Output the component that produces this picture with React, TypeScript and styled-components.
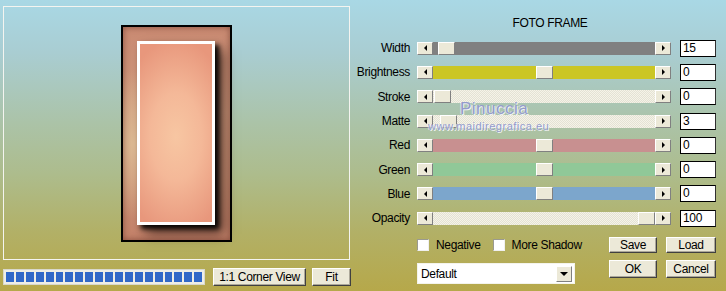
import * as React from 'react';
import styled, { createGlobalStyle } from 'styled-components';

const GlobalStyle = createGlobalStyle`
  html, body {
    margin: 0;
    padding: 0;
  }
  body {
    font-family: "Liberation Sans", Arial, sans-serif;
    font-size: 12px;
    letter-spacing: -0.35px;
    color: #000;
  }
`;

const Window = styled.div`
  position: relative;
  width: 726px;
  height: 291px;
  display: flex;
  overflow: hidden;
  background: linear-gradient(
    to bottom,
    #a9d8e5 0%,
    #a9cdd2 18%,
    #abc3a8 42%,
    #adbc8c 60%,
    #b2b066 80%,
    #b6a84a 100%
  );
`;

const LeftPane = styled.div`
  width: 352px;
  padding: 6px 0 0 3px;
  box-sizing: border-box;
  display: flex;
  flex-direction: column;
`;

const Preview = styled.div`
  width: 347px;
  height: 254px;
  box-sizing: border-box;
  border: 1px solid #f4f4f0;
  display: flex;
  align-items: center;
  justify-content: center;
`;

const Frame = styled.div`
  width: 111px;
  height: 217px;
  box-sizing: border-box;
  border: 2px solid #000;
  padding: 14px 0 0 14px;
  background:
    radial-gradient(ellipse 60% 50% at 10% 55%, rgba(222, 190, 150, 0.9), rgba(222, 190, 150, 0) 70%),
    linear-gradient(to bottom, #c98a72 0%, #d09a7e 40%, #cc9276 70%, #c4826a 100%);
  box-shadow: inset 0 0 6px rgba(90, 40, 30, 0.6);
`;

const Card = styled.div`
  width: 78px;
  height: 184px;
  box-sizing: border-box;
  border: 3px solid #fff;
  background:
    radial-gradient(ellipse 80% 55% at 50% 52%, #f7c6a2 0%, #f4b898 45%, #e8977c 100%);
  box-shadow: 4px 4px 5px rgba(0, 0, 0, 0.95), 9px 9px 12px rgba(30, 15, 10, 0.6);
`;

const BottomBar = styled.div`
  display: flex;
  align-items: center;
  margin-top: 8px;
`;

const Progress = styled.div`
  width: 202px;
  height: 16px;
  box-sizing: border-box;
  padding: 2px 2px;
  background: #eeeee6;
  border: 1px solid #d8d8cc;
  display: flex;
  gap: 2px;
`;

const Block = styled.div`
  width: 8px;
  height: 100%;
  background: #3068c8;
`;

const Button = styled.button<{ $w: number; $h: number }>`
  width: ${(p) => p.$w}px;
  height: ${(p) => p.$h}px;
  padding: 0;
  box-sizing: border-box;
  background: #ece9d8;
  border: 1px solid;
  border-color: #ffffff #404040 #404040 #ffffff;
  box-shadow: inset -1px -1px 0 #aca899;
  font-family: inherit;
  font-size: 12px;
  letter-spacing: -0.35px;
  white-space: nowrap;
  color: #000;
  line-height: 1;
`;

const RightPane = styled.div`
  position: relative;
  flex: 1;
  display: flex;
  flex-direction: column;
`;

const Title = styled.div`
  height: 36px;
  box-sizing: border-box;
  padding: 16px 0 0 22px;
  text-align: center;
  line-height: 14px;
`;

const Rows = styled.div`
  display: grid;
  grid-template-columns: 58px 255px 36px;
  grid-auto-rows: 24.3px;
  column-gap: 7px;
  align-items: center;
`;

const Label = styled.div`
  text-align: right;
  line-height: 14px;
  white-space: nowrap;
`;

const Slider = styled.div`
  display: flex;
  height: 13px;
  margin-right: 1px;
`;

const ArrowBtn = styled.div`
  width: 16px;
  height: 13px;
  box-sizing: border-box;
  background: #ece9d8;
  border: 1px solid;
  border-color: #ffffff #808080 #808080 #ffffff;
  display: flex;
  align-items: center;
  justify-content: center;
`;

const Tri = styled.div<{ $dir: 'left' | 'right' | 'down' }>`
  width: 0;
  height: 0;
  ${(p) =>
    p.$dir === 'left'
      ? 'border-top: 3px solid transparent; border-bottom: 3px solid transparent; border-right: 3px solid #000;'
      : p.$dir === 'right'
      ? 'border-top: 3px solid transparent; border-bottom: 3px solid transparent; border-left: 3px solid #000;'
      : 'border-left: 4px solid transparent; border-right: 4px solid transparent; border-top: 4px solid #000;'}
`;

const Track = styled.div<{ $color: string }>`
  position: relative;
  flex: 1;
  background: ${(p) =>
    p.$color === 'hatch'
      ? 'repeating-conic-gradient(#f5f3e8 0 25%, #e4e2d4 0 50%) 0 0 / 2px 2px'
      : p.$color};
`;

const Thumb = styled.div`
  position: absolute;
  top: 0;
  width: 17px;
  height: 13px;
  box-sizing: border-box;
  background: #ece9d8;
  border: 1px solid;
  border-color: #ffffff #808080 #808080 #ffffff;
`;

const ValueBox = styled.div`
  width: 36px;
  height: 17px;
  box-sizing: border-box;
  background: #fff;
  border: 1px solid #000;
  border-right-color: #303030;
  padding-left: 2px;
  line-height: 15px;
  margin-left: 1px;
`;

const Controls = styled.div`
  display: flex;
  margin-top: 7px;
  padding-left: 65px;
`;

const LeftControls = styled.div`
  width: 192px;
  display: flex;
  flex-direction: column;
`;

const CheckRow = styled.div`
  display: flex;
  align-items: center;
  height: 16px;
`;

const Check = styled.label<{ $gap: number }>`
  display: flex;
  align-items: center;
  gap: 7px;
  margin-right: ${(p) => p.$gap}px;
  line-height: 14px;
  white-space: nowrap;
`;

const Box = styled.span`
  display: inline-block;
  width: 12px;
  height: 12px;
  box-sizing: border-box;
  background: #fff;
  border: 1px solid;
  border-color: #9a9a90 #f0f0f0 #f0f0f0 #9a9a90;
`;

const Select = styled.div`
  margin-top: 10px;
  width: 158px;
  height: 21px;
  box-sizing: border-box;
  background: #fff;
  border: 1px solid #f4f4ec;
  display: flex;
  align-items: center;
  justify-content: space-between;
  padding: 0 2px 0 3px;
`;

const DropBtn = styled.div`
  width: 16px;
  height: 16px;
  box-sizing: border-box;
  background: #ece9d8;
  border: 1px solid;
  border-color: #ffffff #808080 #808080 #ffffff;
  display: flex;
  align-items: center;
  justify-content: center;
`;

const ButtonGrid = styled.div`
  display: grid;
  grid-template-columns: 48px 50px;
  grid-template-rows: 16px 18px;
  column-gap: 9px;
  row-gap: 7px;
`;

const Watermark = styled.div<{ $size: number; $left: number; $top: number }>`
  position: absolute;
  left: ${(p) => p.$left}px;
  top: ${(p) => p.$top}px;
  font-family: "Liberation Sans", Arial, sans-serif;
  font-size: ${(p) => p.$size}px;
  color: #939bcb;
  letter-spacing: 0.5px;
  text-shadow: 1px 1px 0 #f2f2f6, -1px 0 0 rgba(255, 255, 255, 0.6);
  white-space: nowrap;
`;

interface ISliderRow {
  name: string;
  value: string;
  color: string;
  pos: number;
}

const rows: ISliderRow[] = [
  { name: 'Width', value: '15', color: '#808080', pos: 5 },
  { name: 'Brightness', value: '0', color: '#cbc624', pos: 103 },
  { name: 'Stroke', value: '0', color: 'hatch', pos: 1 },
  { name: 'Matte', value: '3', color: 'hatch', pos: 7 },
  { name: 'Red', value: '0', color: '#c89090', pos: 103 },
  { name: 'Green', value: '0', color: '#90c898', pos: 103 },
  { name: 'Blue', value: '0', color: '#7ca6cc', pos: 103 },
  { name: 'Opacity', value: '100', color: 'hatch', pos: 205 },
];

export default class App extends React.Component {
  public render() {
    const blocks = Array.from({ length: 20 }, (_, i) => <Block key={i} />);
    return (
      <>
        <GlobalStyle />
        <Window>
          <LeftPane>
            <Preview>
              <Frame>
                <Card />
              </Frame>
            </Preview>
            <BottomBar>
              <Progress>{blocks}</Progress>
              <Button $w={93} $h={18} style={{ marginLeft: 8 }}>1:1 Corner View</Button>
              <Button $w={39} $h={18} style={{ marginLeft: 6 }}>Fit</Button>
            </BottomBar>
          </LeftPane>
          <RightPane>
            <Title>FOTO FRAME</Title>
            <Rows>
              {rows.map((r) => (
                <React.Fragment key={r.name}>
                  <Label>{r.name}</Label>
                  <Slider>
                    <ArrowBtn><Tri $dir='left' /></ArrowBtn>
                    <Track $color={r.color}>
                      <Thumb style={{ left: r.pos }} />
                    </Track>
                    <ArrowBtn><Tri $dir='right' /></ArrowBtn>
                  </Slider>
                  <ValueBox>{r.value}</ValueBox>
                </React.Fragment>
              ))}
            </Rows>
            <Controls>
              <LeftControls>
                <CheckRow>
                  <Check $gap={12}><Box />Negative</Check>
                  <Check $gap={0}><Box />More Shadow</Check>
                </CheckRow>
                <Select>
                  <span>Default</span>
                  <DropBtn><Tri $dir='down' /></DropBtn>
                </Select>
              </LeftControls>
              <ButtonGrid>
                <Button $w={48} $h={16}>Save</Button>
                <Button $w={50} $h={16}>Load</Button>
                <Button $w={48} $h={18}>OK</Button>
                <Button $w={50} $h={18}>Cancel</Button>
              </ButtonGrid>
            </Controls>
            <Watermark $size={17} $left={108} $top={99}>Pinuccia</Watermark>
            <Watermark $size={11} $left={76} $top={120}>www.maidiregrafica.eu</Watermark>
          </RightPane>
        </Window>
      </>
    );
  }
}
